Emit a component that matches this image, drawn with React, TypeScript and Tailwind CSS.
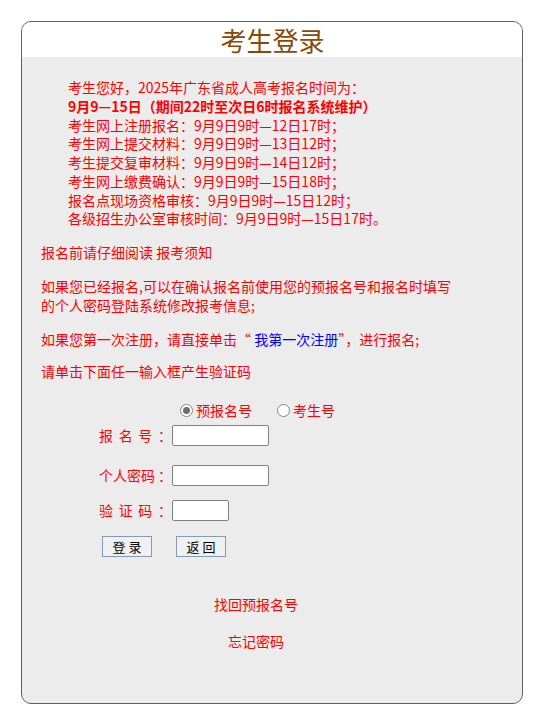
import React from 'react';

const lines = [
  '考生网上注册报名：9月9日9时—12日17时；',
  '考生网上提交材料：9月9日9时—13日12时；',
  '考生提交复审材料：9月9日9时—14日12时；',
  '考生网上缴费确认：9月9日9时—15日18时；',
  '报名点现场资格审核：9月9日9时—15日12时；',
  '各级招生办公室审核时间：9月9日9时—15日17时。'
];

function Radio({ checked, label }: { checked?: boolean; label: string }) {
  return (
    <label className="flex items-center">
      <span className="w-[13px] h-[13px] rounded-full border border-[#858585] bg-white flex items-center justify-center">
        {checked && <span className="w-[7px] h-[7px] rounded-full bg-[#6f6f6f]" />}
      </span>
      <span className="ml-[3px]">{label}</span>
    </label>
  );
}

function FormRow({ parts, inputWidth, className }: { parts: string[]; inputWidth: string; className?: string }) {
  return (
    <div className={'flex items-center pl-[77px] ' + (className || '')}>
      <div className="w-[73px] flex justify-between">
        {parts.map((p, i) => (
          <span key={i}>{p}</span>
        ))}
      </div>
      <input
        type="text"
        className={'h-[21px] bg-white border border-[#808080] rounded-[2px] outline-none ' + inputWidth}
      />
    </div>
  );
}

export default function App() {
  return (
    <div className="min-h-[720px] bg-white pt-[21px] font-['Noto_Sans_CJK_SC',sans-serif]">
      <div className="ml-[21px] w-[502px] h-[683px] border border-[#5b6170] rounded-[10px] overflow-hidden flex flex-col bg-[#ececec]">
        {/* Header */}
        <div className="h-[35px] bg-white flex items-center justify-center">
          <h1 className="text-[26px] leading-none text-[#8a4a06] pl-[1px]">考生登录</h1>
        </div>

        {/* Body */}
        <div className="flex-1 text-[14px] leading-[18.75px] text-[#ff0000]">
          <div className="pl-[46px] pt-[21px]">
            <p>考生您好，2025年广东省成人高考报名时间为：</p>
            <p className="font-bold">9月9—15日（期间22时至次日6时报名系统维护）</p>
            {lines.map(l => (
              <p key={l}>{l}</p>
            ))}
          </div>

          <div className="pl-[19px]">
            <p className="mt-[15px]">报名前请仔细阅读 报考须知</p>
            <p className="mt-[15px] w-[414px]">
              如果您已经报名,可以在确认报名前使用您的预报名号和报名时填写的个人密码登陆系统修改报考信息;
            </p>
            <p className="mt-[15.5px]">
              如果您第一次注册，请直接单击“ <span className="text-[#0000ff]">我第一次注册</span>”，进行报名;
            </p>
            <p className="mt-[13px]">请单击下面任一输入框产生验证码</p>
          </div>

          {/* Radios */}
          <div className="mt-[21px] flex items-center pl-[158px] gap-[25px]">
            <Radio checked label="预报名号" />
            <Radio label="考生号" />
          </div>

          <FormRow className="mt-[4.5px]" parts={['报', '名', '号', '：']} inputWidth="w-[97px]" />
          <FormRow className="mt-[19px]" parts={['个人密码', '：']} inputWidth="w-[97px]" />
          <FormRow className="mt-[14px]" parts={['验', '证', '码', '：']} inputWidth="w-[57px]" />

          {/* Buttons */}
          <div className="mt-[15px] flex pl-[80px] gap-[24px] text-[13px] text-black">
            <button className="w-[50px] h-[21px] border border-[#7f9db9] bg-[#f0f0f0] leading-none">登 录</button>
            <button className="w-[50px] h-[21px] border border-[#7f9db9] bg-[#f0f0f0] leading-none">返 回</button>
          </div>

          {/* Links */}
          <div className="ml-[134px] w-[200px] text-center">
            <p className="mt-[38.5px]">找回预报名号</p>
            <p className="mt-[18px]">忘记密码</p>
          </div>
        </div>
      </div>
    </div>
  );
}
